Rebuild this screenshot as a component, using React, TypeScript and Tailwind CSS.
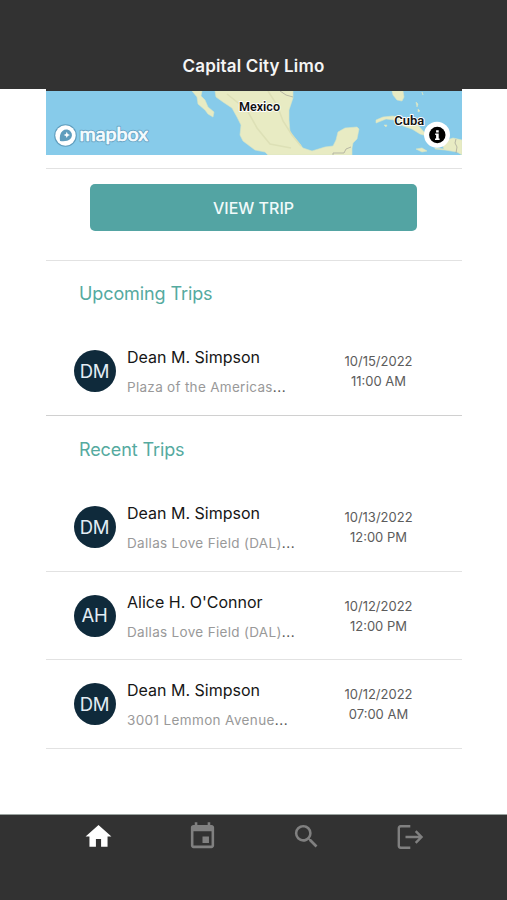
import React from "react";

type Trip = { initials: string; name: string; place: string; date: string; time: string; placeClass: string };

const upcoming: Trip[] = [
  { initials: "DM", name: "Dean M. Simpson", place: "Plaza of the Americas", date: "10/15/2022", time: "11:00 AM", placeClass: "tracking-[0.3px]" },
];
const recent: Trip[] = [
  { initials: "DM", name: "Dean M. Simpson", place: "Dallas Love Field (DAL)", date: "10/13/2022", time: "12:00 PM", placeClass: "tracking-[0.32px]" },
  { initials: "AH", name: "Alice H. O'Connor", place: "Dallas Love Field (DAL)", date: "10/12/2022", time: "12:00 PM", placeClass: "tracking-[0.32px]" },
  { initials: "DM", name: "Dean M. Simpson", place: "3001 Lemmon Avenue", date: "10/12/2022", time: "07:00 AM", placeClass: "tracking-[0.37px]" },
];

function TripMap() {
  return (
    <svg className="block h-16 w-full" viewBox="0 0 416 64">
      <rect width="416" height="64" fill="#87cbea" />
      <g fill="#e8ebc3" stroke="#d9e6c4" strokeWidth="0.6" strokeLinejoin="round">
        <path d="M146 0L151 6L152 13L159 19L162 23L167 26L168 21L162 16L159 9L155 5L156 0Z" />
        <path d="M169 0L170 6L177 11L186 17L191 26L195 34L194 44L197 50L209 59L219 61L222 64H306L306 57L307 52L311 48L313 38L311 36L299 37L292 41L290 49L287 55L279 56L266 60L257 57L252 51L244 41L243 29L243 19L247 7L247 0Z" />
        <path d="M346 0L347 4L351 9L356 10L358 6L357 0Z" />
        <path d="M330 32L330 29L337 26L347 25L359 28L371 33L378 41L384 46L374 43L366 38L357 35L349 29L340 28Z" />
        <path d="M338 34L341 34L340 36ZM370 58L376 57L381 60L376 61ZM370 11L372 13L371 16ZM372 18L374 20L372 21ZM376 1L377 4Z" />
        <path d="M389 57L398 58L396 53L401 49L407 47L416 49V64L411 61L399 59L389 58Z" />
      </g>
      <g fill="none" stroke="#dde0b6" strokeWidth="1.6">
        <path d="M222 0L231 14L237 30L246 44L255 55M181 3L201 19L211 37L224 53L245 57" />
      </g>
      <g fill="none" stroke="#aaa99c" strokeWidth="0.8">
        <path d="M234 0L240 4L247 6M287 64V62H298L300 58L305 56M410 48L409 52L411 56L410 62" />
      </g>
      <g fontFamily="Roboto, sans-serif" fontWeight="600" fontSize="12.5" fill="#111" stroke="#fff" strokeWidth="1.8" strokeLinejoin="round" paintOrder="stroke">
        <text x="193" y="20.3" textLength="41" lengthAdjust="spacingAndGlyphs">Mexico</text>
        <text x="348.3" y="34.3" textLength="30" lengthAdjust="spacingAndGlyphs">Cuba</text>
      </g>
      <g>
        <circle cx="19.5" cy="44.5" r="11.3" fill="#5f9dbd" />
        <circle cx="19.5" cy="44.5" r="10.2" fill="#fff" />
        <path d="M14 50C13.4 45.5 14 42 16.5 39.9C19 37.9 22.5 38.3 24.5 40.5C26.6 42.8 26.4 46 24.3 48C22 50.2 18 50.6 14 50Z" fill="#5f9dbd" />
        <path d="M20.8 40.8L21.7 42.9L24 43.9L21.7 44.9L20.8 47L19.9 44.9L17.7 43.9L19.9 42.9Z" fill="#fff" />
        <text x="33.5" y="50" fontFamily="Lato, sans-serif" fontWeight="400" fontSize="19.5" fill="#f4fafd" stroke="#6ba6c6" strokeWidth="2.4" paintOrder="stroke" strokeLinejoin="round" textLength="68.5" lengthAdjust="spacingAndGlyphs">mapbox</text>
        <text x="33.5" y="50" fontFamily="Lato, sans-serif" fontWeight="400" fontSize="19.5" fill="#f4fafd" stroke="#f4fafd" strokeWidth="0.5" textLength="68.5" lengthAdjust="spacingAndGlyphs">mapbox</text>
      </g>
      <circle cx="391" cy="43.8" r="13" fill="#fff" />
      <circle cx="391.3" cy="44" r="8.2" fill="#000" />
      <path d="M390.1 39.2h2.6v2.2h-2.6zM389.2 42.6h3.5v5h.9v1.5h-4.6v-1.5h1.1v-3.5h-.9z" fill="#fff" />
    </svg>
  );
}

function TripRow({ trip, line }: { trip: Trip; line: string }) {
  return (
    <div className={"flex border-b pl-7 " + line}>
      <div className="mt-[23px] flex h-[42px] w-[42px] shrink-0 items-center justify-center rounded-full bg-[#0f2a3b] pt-px text-[18.5px] tracking-[-0.2px] text-[#e3edf5]">
        {trip.initials}
      </div>
      <div className="ml-[11.5px] w-[190px] whitespace-nowrap pt-[18px]">
        <div className="text-[16px] leading-6 text-[#161616]">{trip.name}</div>
        <div className={"mt-2 text-[13.5px] leading-5 text-[#999] " + trip.placeClass}>
          {trip.place}<span className="tracking-[0.6px] text-[#555]">...</span>
        </div>
      </div>
      <div className="ml-[11.5px] w-[100px] pt-[24px] text-center text-[13px] leading-[20px] text-[#5c5c5c]">
        <div>{trip.date}</div>
        <div>{trip.time}</div>
      </div>
    </div>
  );
}

export default function App() {
  return (
    <div className="flex h-[900px] w-[507px] flex-col overflow-hidden bg-white font-['Inter',sans-serif]">
      <header className="flex h-[89px] shrink-0 justify-center bg-[#323232] pt-[54px] text-[17px] font-semibold leading-6 tracking-[0.15px] text-[#f5f5f5]">
        <h1>Capital City Limo</h1>
      </header>
      <main className="mx-auto w-[416px] flex-1">
        <div className="border-t-2 border-[#323232]"><TripMap /></div>
        <div className="mt-[13px] h-[93px] border-y border-[#e2e2e2] px-11 pt-[15px]">
          <button className="ml-[0.5px] block h-[47px] w-[327px] rounded-[5px] bg-[#53a4a3] text-[16px] font-medium text-[#f0fafa]">VIEW TRIP</button>
        </div>
        <h2 className="h-[66px] pl-[33.5px] pt-[21px] text-[18px] leading-6 tracking-[-0.1px] text-[#55aa9f]">Upcoming Trips</h2>
        {upcoming.map((t) => <TripRow key={t.date} trip={t} line="h-[89px] border-[#d0d0d0]" />)}
        <h2 className="h-[67px] pl-[33.5px] pt-[22px] text-[18px] leading-6 tracking-[-0.1px] text-[#55aa9f]">Recent Trips</h2>
        {recent.map((t, i) => <TripRow key={i} trip={t} line="h-[88.6px] border-[#e2e2e2]" />)}
      </main>
      <nav className="flex h-[86px] shrink-0 justify-center border-t border-[#9aa39f] bg-[#323232] pl-px pt-[6px] text-[#808080]">
        <a className="flex w-[104px] justify-center text-white">
          <svg className="h-[31px] w-[31px]" viewBox="0 0 24 24" fill="currentColor"><path d="M10 20v-6h4v6h5v-8h3L12 3 2 12h3v8z" /></svg>
        </a>
        <a className="flex w-[104px] justify-center">
          <svg className="h-[31px] w-[31px]" viewBox="0 0 24 24" fill="currentColor"><path d="M17 12h-5v5h5v-5zM16 1v2H8V1H6v2H5c-1.11 0-1.99.9-1.99 2L3 19c0 1.1.89 2 2 2h14c1.1 0 2-.9 2-2V5c0-1.1-.9-2-2-2h-1V1h-2zm3 18H5V8h14v11z" /></svg>
        </a>
        <a className="flex w-[104px] justify-center">
          <svg className="h-[31px] w-[31px]" viewBox="0 0 24 24" fill="currentColor"><path d="M15.5 14h-.79l-.28-.27A6.471 6.471 0 0 0 16 9.5 6.5 6.5 0 1 0 9.5 16c1.61 0 3.09-.59 4.23-1.57l.27.28v.79l5 4.99L20.49 19l-4.99-5zm-6 0C7.01 14 5 11.99 5 9.5S7.01 5 9.5 5 14 7.01 14 9.5 11.99 14 9.5 14z" /></svg>
        </a>
        <a className="flex w-[104px] justify-center">
          <svg className="h-[31px] w-[31px]" viewBox="0 0 31 31" fill="none" stroke="currentColor" strokeWidth="2.4"><path d="M15.3 5.3H5.7Q3.8 5.3 3.8 7.2V24.8Q3.8 26.7 5.7 26.7H15.3M10.5 16H26.4M20.7 10.2L26.5 16L20.7 21.8" /></svg>
        </a>
      </nav>
    </div>
  );
}
